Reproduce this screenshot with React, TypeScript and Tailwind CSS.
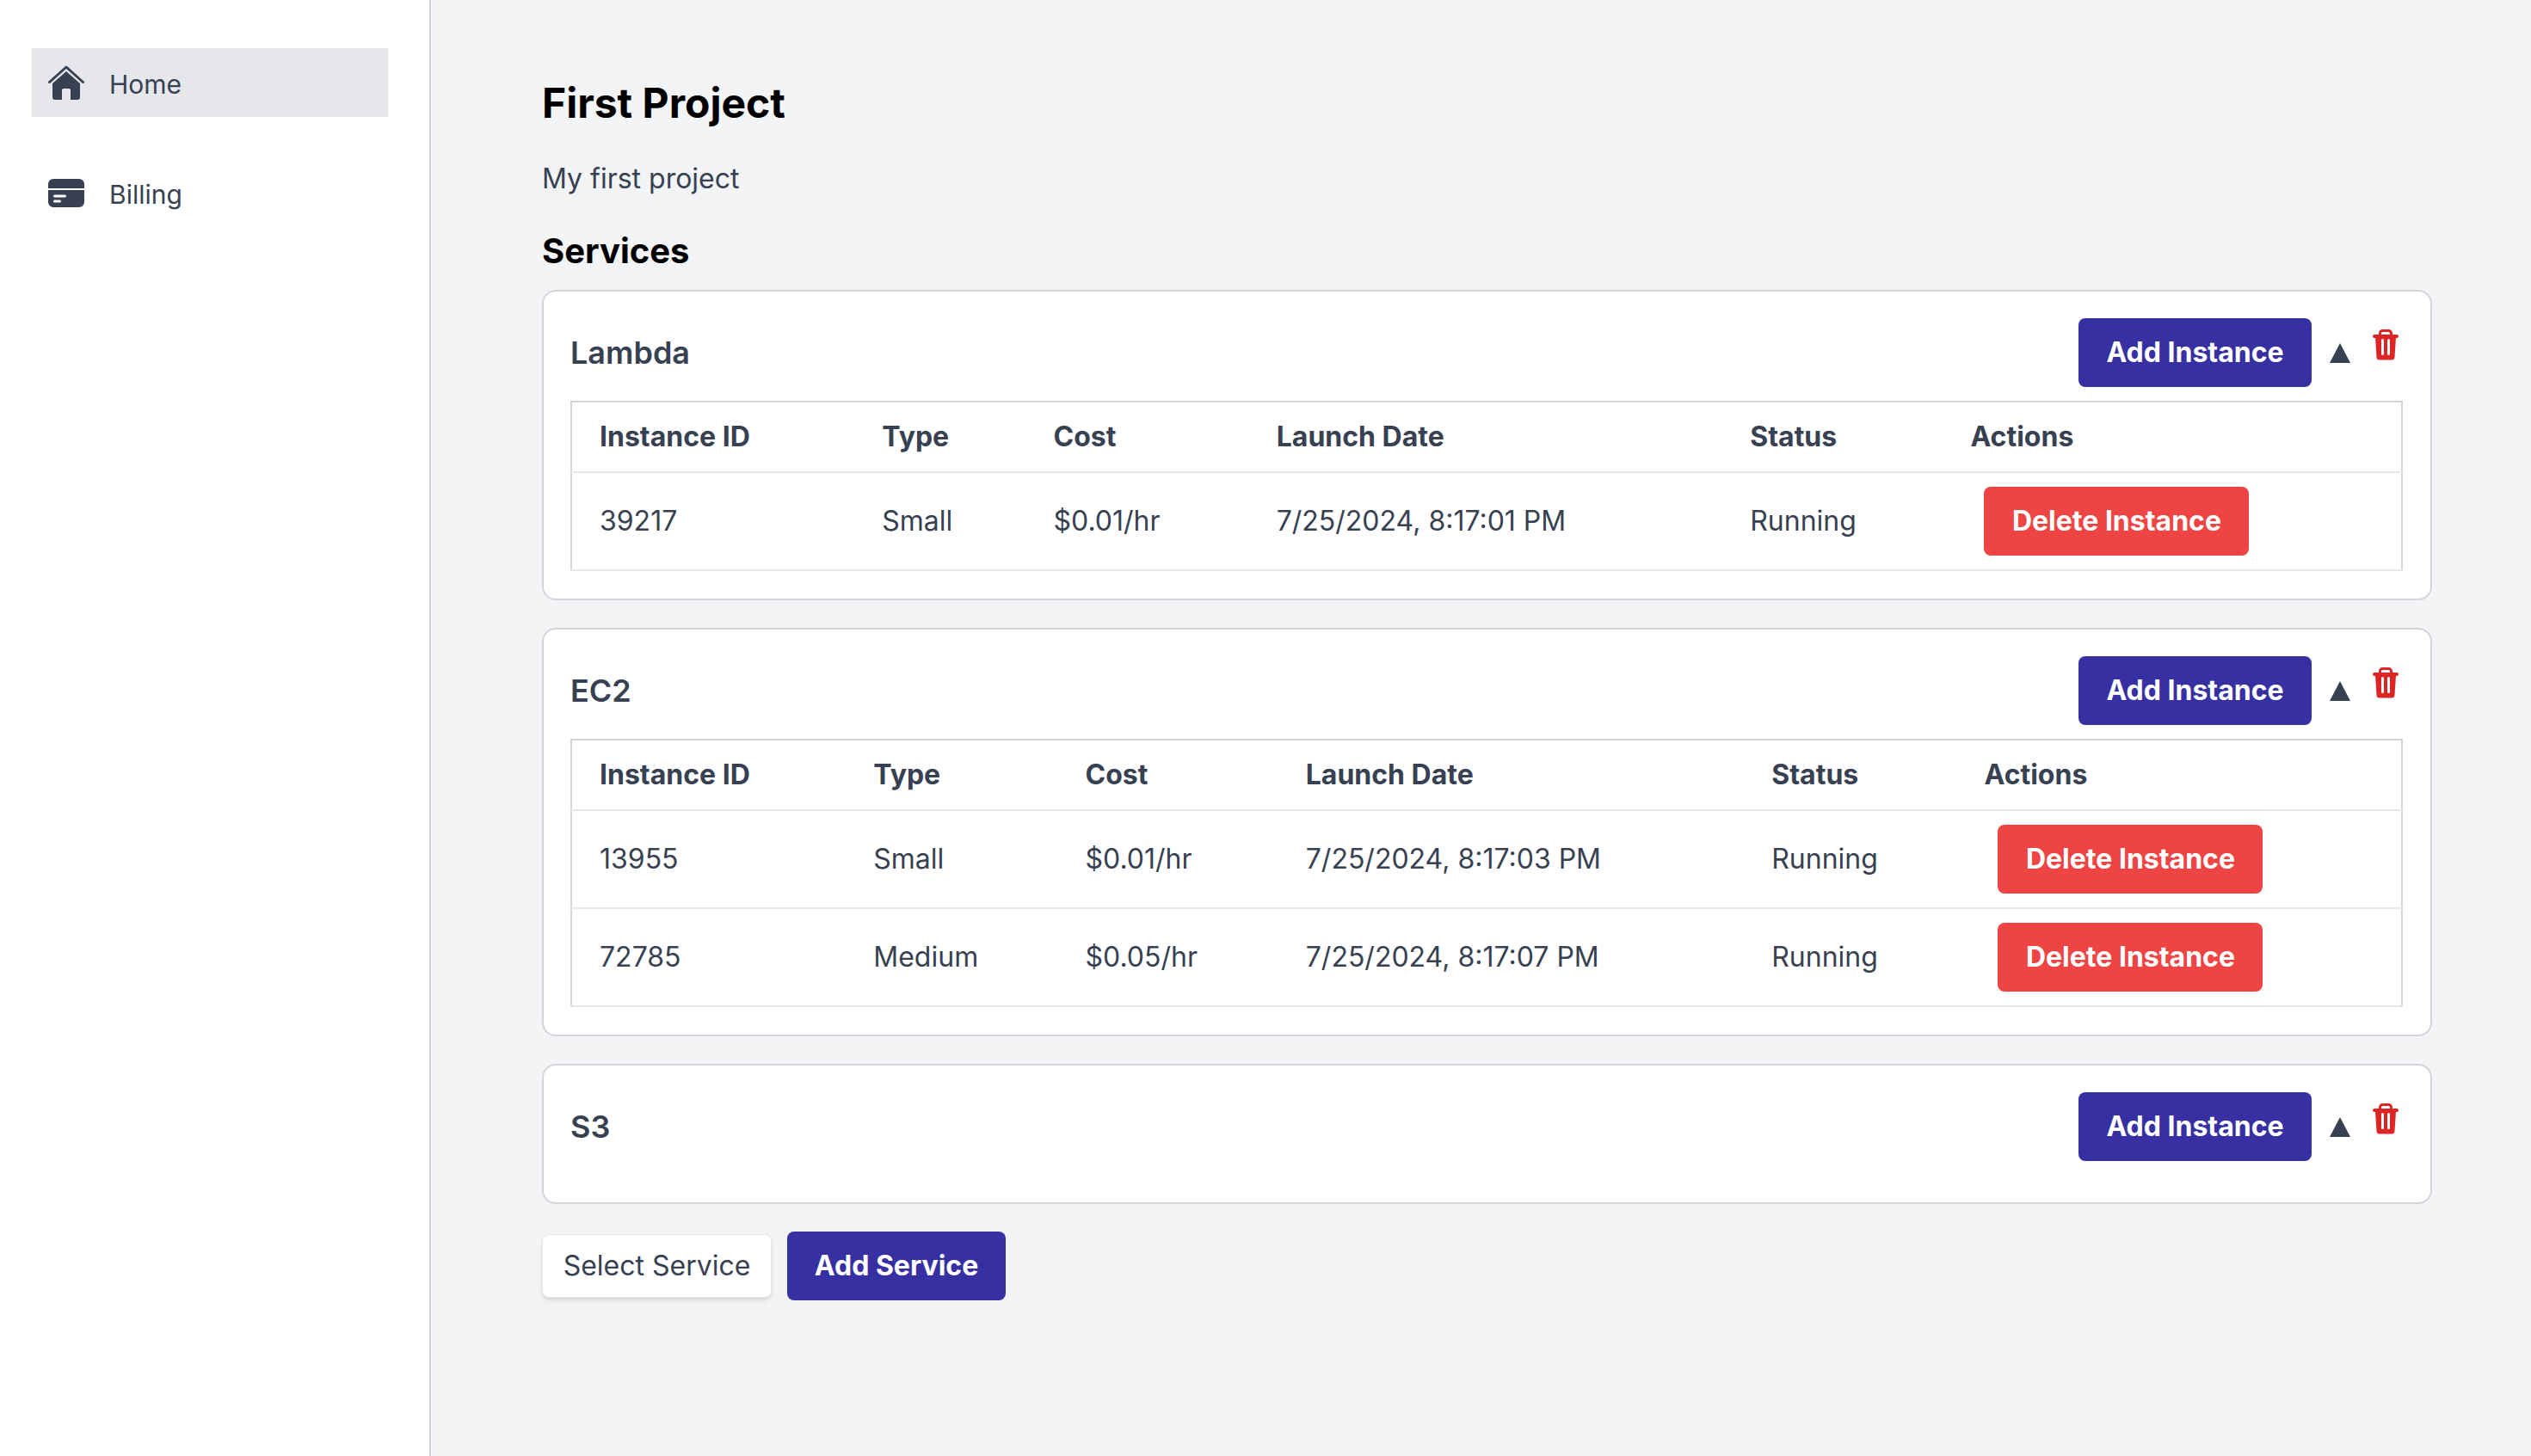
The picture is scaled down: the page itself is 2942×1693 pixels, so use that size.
type Instance = {
  id: string
  type: string
  cost: string
  launched: string
}

type Service = {
  name: string
  columns: string[]
  instances: Instance[]
}

const headers = ['Instance ID', 'Type', 'Cost', 'Launch Date', 'Status', 'Actions']

const services: Service[] = [
  {
    name: 'Lambda',
    columns: ['w-[329px]', 'w-[199px]', 'w-[259px]', 'w-[550px]', 'w-[256px]', 'w-[533px]'],
    instances: [{ id: '39217', type: 'Small', cost: '$0.01/hr', launched: '7/25/2024, 8:17:01 PM' }]
  },
  {
    name: 'EC2',
    columns: ['w-[319px]', 'w-[246px]', 'w-[256px]', 'w-[541px]', 'w-[247px]', 'w-[517px]'],
    instances: [
      { id: '13955', type: 'Small', cost: '$0.01/hr', launched: '7/25/2024, 8:17:03 PM' },
      { id: '72785', type: 'Medium', cost: '$0.05/hr', launched: '7/25/2024, 8:17:07 PM' }
    ]
  },
  { name: 'S3', columns: [], instances: [] }
]

function HomeIcon() {
  return (
    <svg width="42" height="40" viewBox="0 0 42 40" fill="none" aria-hidden>
      <path
        d="M1.5 19.5 21 2l19.5 17.5"
        stroke="currentColor"
        strokeWidth="3"
        strokeLinecap="round"
        strokeLinejoin="round"
      />
      <path
        d="M21 7 37 21v16a3 3 0 0 1-3 3h-8V29a2 2 0 0 0-2-2h-6a2 2 0 0 0-2 2v11H8a3 3 0 0 1-3-3V21Z"
        fill="currentColor"
      />
    </svg>
  )
}

function CardIcon() {
  return (
    <svg width="42" height="33" viewBox="0 0 42 33" fill="none" aria-hidden>
      <path d="M0 11V6a6 6 0 0 1 6-6h30a6 6 0 0 1 6 6v5Z" fill="currentColor" />
      <path
        fillRule="evenodd"
        clipRule="evenodd"
        d="M0 13h42v14a6 6 0 0 1-6 6H6a6 6 0 0 1-6-6Zm7.5 5.5a1.5 1.5 0 0 0 0 3h12a1.5 1.5 0 0 0 0-3Zm0 6a1.5 1.5 0 0 0 0 3h6a1.5 1.5 0 0 0 0-3Z"
        fill="currentColor"
      />
    </svg>
  )
}

function TrashIcon() {
  return (
    <svg width="30" height="36" viewBox="0 0 30 36" fill="none" className="mb-[19px] ml-[26px] mr-[5px]" aria-hidden>
      <path
        d="M8.5 7V4.5A3 3 0 0 1 11.5 1.5h7a3 3 0 0 1 3 3V7"
        stroke="#dc2626"
        strokeWidth="3"
      />
      <rect y="6" width="30" height="4" rx="2" fill="#dc2626" />
      <path
        fillRule="evenodd"
        clipRule="evenodd"
        d="M3 9h24l-1.5 23a3.5 3.5 0 0 1-3.5 3.5H8A3.5 3.5 0 0 1 4.500 32Zm7 3.500v16a1.500 1.500 0 0 0 3 0v-16a1.500 1.500 0 0 0-3 0Zm7 0v16a1.500 1.500 0 0 0 3 0v-16a1.500 1.500 0 0 0-3 0Z"
        fill="#dc2626"
      />
    </svg>
  )
}

function InstanceTable({ service }: { service: Service }) {
  return (
    <table className="w-full table-fixed border-collapse border-2 border-[#d1d5db]">
      <colgroup>
        {service.columns.map((width) => (
          <col key={width} className={width} />
        ))}
      </colgroup>
      <thead>
        <tr className="h-[82px] border-b-2 border-[#e5e7eb]">
          {headers.map((header) => (
            <th key={header} className="px-8 text-left font-bold">
              {header}
            </th>
          ))}
        </tr>
      </thead>
      <tbody>
        {service.instances.map((instance) => (
          <tr key={instance.id} className="h-[114px] border-b-2 border-[#e5e7eb]">
            <td className="px-8">{instance.id}</td>
            <td className="px-8">{instance.type}</td>
            <td className="px-8">{instance.cost}</td>
            <td className="px-8">{instance.launched}</td>
            <td className="px-8">Running</td>
            <td className="px-8">
              <button className="ml-4 h-20 w-[308px] rounded-lg bg-[#ef4444] font-bold text-white">
                Delete Instance
              </button>
            </td>
          </tr>
        ))}
      </tbody>
    </table>
  )
}

function ServiceCard({ service }: { service: Service }) {
  return (
    <section className="rounded-2xl border-2 border-[#d1d5db] bg-white pt-[31px] pr-8 pb-8 pl-[31px]">
      <div className="mb-4 flex h-20 items-center">
        <h3 className="flex-1 text-[36px] font-semibold">{service.name}</h3>
        <button className="h-20 w-[271px] rounded-lg bg-[#3730a3] font-bold text-white">
          Add Instance
        </button>
        <svg width="24" height="23" viewBox="0 0 24 23" className="ml-[21px]" aria-hidden>
          <path d="M12 0 24 23H0Z" fill="currentColor" />
        </svg>
        <TrashIcon />
      </div>
      {service.instances.length > 0 && <InstanceTable service={service} />}
    </section>
  )
}

export default function App() {
  return (
    <div className="flex min-h-[1693px] bg-[#f3f4f6] font-['Inter',sans-serif] text-[32px] text-[#374151]">
      <aside className="w-[501px] shrink-0 border-r-2 border-[#d1d5db] bg-white pt-14 pl-[37px] text-[30px]">
        <nav className="flex w-[414px] flex-col gap-12">
          <a className="flex h-20 items-center bg-[#e5e7eb] pl-[19px]">
            <HomeIcon />
            <span className="ml-[29px] pt-1">Home</span>
          </a>
          <a className="flex h-20 items-center pl-[19px]">
            <CardIcon />
            <span className="ml-[29px] pt-1">Billing</span>
          </a>
        </nav>
      </aside>
      <main className="w-[2326px] pt-[84px] pl-[129px]">
        <h1 className="text-[48px] leading-[72px] font-bold text-black">First Project</h1>
        <p className="mt-[22px] leading-[60px]">My first project</p>
        <h2 className="mt-[26px] text-[40px] leading-[56px] font-bold text-black">Services</h2>
        <div className="mt-[17px] flex flex-col gap-8">
          {services.map((service) => (
            <ServiceCard key={service.name} service={service} />
          ))}
        </div>
        <div className="mt-8 flex items-center gap-[18px]">
          <div className="flex h-[74px] w-[267px] items-center justify-center rounded-lg border border-[#e5e7eb] bg-white shadow-md">
            Select Service
          </div>
          <button className="h-20 w-[254px] rounded-lg bg-[#3730a3] font-bold text-white">
            Add Service
          </button>
        </div>
      </main>
    </div>
  )
}
